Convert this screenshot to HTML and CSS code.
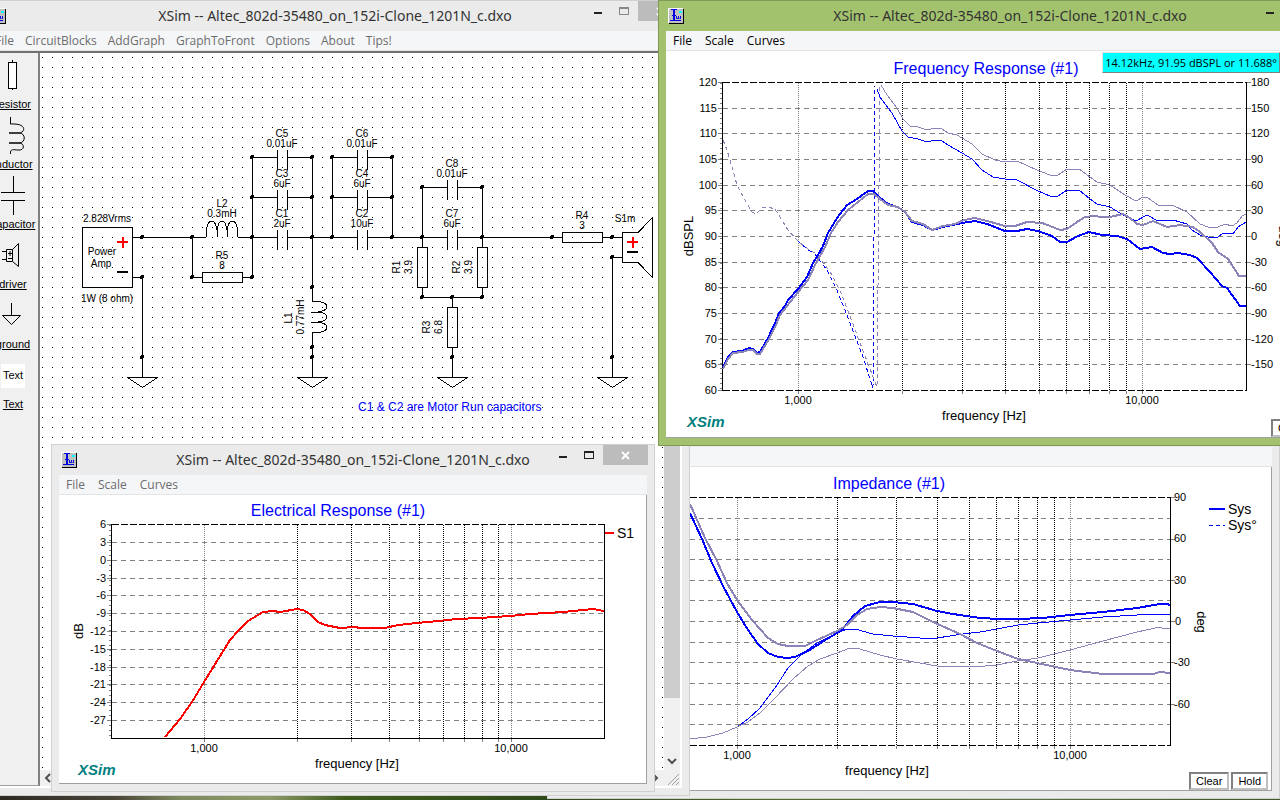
FILE: index.html
```
<!DOCTYPE html>
<html lang="en">
<head>
    <meta charset="UTF-8">
    <meta name="viewport" content="width=device-width, initial-scale=1.0">
    <title>XSim</title>
    <link rel="stylesheet" href="styles.css">
</head>
<body>
    <!-- Shared symbols -->
    <svg class="defs" width="0" height="0" aria-hidden="true">
        <symbol id="app-icon" viewBox="0 0 16 16">
            <rect width="15" height="15" fill="#fff"/>
            <path d="M15 1V15H1V16H16V1Z" fill="#000"/>
            <rect x="1" y="1" width="14" height="14" fill="#c0c0c0"/>
            <path d="M3 1.500H9M2 12.500H13M4 7.500H8M8.500 8V10.500H10.500V8M11.500 10.500H12.500V8" fill="none" stroke="#0000e0"/>
            <path d="M6 2V13" stroke="#0000e0" stroke-width="2"/>
            <rect x="11" y="3" width="3" height="2" fill="#00ffff"/>
        </symbol>
        <symbol id="min-icon" viewBox="0 0 11 11"><path d="M2 7H10" stroke="currentColor" stroke-width="2"/></symbol>
        <symbol id="max-icon" viewBox="0 0 11 11"><path d="M.5 1.500H9.500V8.500H.5ZM0 2H10" fill="none" stroke="currentColor"/></symbol>
        <symbol id="close-icon" viewBox="0 0 11 11"><path d="M2 2L9 9M9 2L2 9" stroke="currentColor" stroke-width="2"/></symbol>
    </svg>

    <main class="desktop">
        <!-- Impedance graph -->
        <section class="window impedance">
            <header class="titlebar">
                <svg class="app-icon"><use href="#app-icon"/></svg>
                <h2></h2>
            </header>
            <nav class="menubar"></nav>
            <div class="graph">
                <svg class="chart" width="716" height="323" viewBox="555 466 716 323">
                    <text class="chart-title" x="889" y="488">Impedance (#1)</text>
                    <path class="grid-h" d="M600 517.500H1170M600 538.500H1170M600 558.500H1170M600 579.500H1170M600 599.500H1170M600 620.500H1170M600 641.500H1170M600 661.500H1170M600 682.500H1170M600 703.500H1170M600 723.500H1170"/>
                    <path class="grid-v" d="M837.500 497V744M896.500 497V744M937.500 497V744M969.500 497V744M996.500 497V744M1018.500 497V744M1037.500 497V744M1054.500 497V744"/>
                    <path class="grid-v decade" d="M737.500 497V744M1070.500 497V744"/>
                    <path class="edge" d="M600 496.500H1170M600 744.500H1170"/>
                    <path class="axis" d="M1170.500 496V745"/>
                    <path class="tick" d="M1171 496.500h4M1171 538.500h4M1171 579.500h4M1171 620.500h4M1171 661.500h4M1171 703.500h4M737.500 745v3M837.500 745v3M896.500 745v3M937.500 745v3M969.500 745v3M996.500 745v3M1018.500 745v3M1037.500 745v3M1054.500 745v3M1070.500 745v3"/>
                    <polyline class="curve blue" points="690,738 707,736 723,732 737,726 748,718 760,707 775,687 788,667 802,653 817,642 837,632 847,628 855,628 873,633 893,635 920,637 937,637 963,633 980,631 997,628 1018,624 1038,622 1070,619 1103,616 1137,614 1158,613 1170,614"/>
                    <polyline class="curve mauve" points="690,738 707,736 723,732 737,726 748,721 760,712 775,697 793,678 808,665 820,658 837,652 850,647 860,648 880,654 897,658 920,662 937,665 985,665 997,664 1017,660 1038,657 1070,649 1103,640 1137,631 1160,626 1164,628 1170,627"/>
                    <polyline class="curve blue thick" points="690,512 702,538 712,562 723,585 730,598 737,611 748,629 758,643 768,652 778,656 787,657 795,656 808,650 827,638 842,629 853,615 865,605 880,601 893,601 913,603 937,610 953,613 980,617 1000,618 1017,618 1043,617 1070,614 1103,611 1137,607 1160,603 1167,603 1170,604"/>
                    <polyline class="curve mauve thick" points="690,503 705,537 717,560 727,582 737,599 752,619 768,637 778,643 788,645 805,645 817,639 837,630 847,624 857,614 867,608 880,606 893,607 913,611 933,621 960,633 977,642 997,650 1018,658 1037,662 1070,669 1103,673 1153,673 1160,671 1170,672"/>
                    <g class="tick-label">
                        <text x="1174" y="500">90</text>
                        <text x="1174" y="541">60</text>
                        <text x="1174" y="583">30</text>
                        <text x="1175" y="624">0</text>
                        <text x="1174" y="665">-30</text>
                        <text x="1174" y="707">-60</text>
                        <text class="middle" x="737" y="758">1,000</text>
                        <text class="middle" x="1070" y="758">10,000</text>
                    </g>
                    <text class="axis-label" x="887" y="774">frequency [Hz]</text>
                    <text class="axis-label" transform="translate(1197 621) rotate(90)">deg</text>
                    <path class="curve blue thick" d="M1209 508H1225"/>
                    <path class="curve blue dashed" d="M1209 524.500H1225"/>
                    <text class="legend" x="1228" y="513">Sys</text>
                    <text class="legend" x="1228" y="529">Sys°</text>
                </svg>
                <div class="graph-buttons">
                    <button type="button">Clear</button>
                    <button type="button">Hold</button>
                </div>
            </div>
        </section>

        <!-- Circuit editor -->
        <section class="window circuit">
            <header class="titlebar">
                <svg class="app-icon"><use href="#app-icon"/></svg>
                <h1>XSim -- Altec_802d-35480_on_152i-Clone_1201N_c.dxo</h1>
                <div class="controls">
                    <button type="button" aria-label="Minimize"><svg><use href="#min-icon"/></svg></button>
                    <button type="button" class="dim" aria-label="Maximize"><svg><use href="#max-icon"/></svg></button>
                    <button type="button" class="close" aria-label="Close"><svg><use href="#close-icon"/></svg></button>
                </div>
            </header>
            <nav class="menubar">
                <button type="button">File</button>
                <button type="button">CircuitBlocks</button>
                <button type="button">AddGraph</button>
                <button type="button">GraphToFront</button>
                <button type="button">Options</button>
                <button type="button">About</button>
                <button type="button">Tips!</button>
            </nav>
            <div class="editor">
                <aside class="palette">
                    <button type="button">
                        <svg width="50" height="44" viewBox="0 0 50 44"><path d="M24.500 7V9M24.500 35V37"/><rect x="20.500" y="9.500" width="8" height="26" fill="#fff"/></svg>
                        <span>resistor</span>
                    </button>
                    <button type="button">
                        <svg width="50" height="44" viewBox="0 0 50 44"><path d="M22.500 4V11C40 10 37 20 31 20H21H31C38 20 38 30 31 30H21H31C37 30 37 38 30 37C26 37 22 35 22.500 41"/></svg>
                        <span>inductor</span>
                    </button>
                    <button type="button">
                        <svg width="50" height="44" viewBox="0 0 50 44"><path d="M25.500 3V19M13 19.500H37M13 27.500H37M25.500 28V42"/></svg>
                        <span>capacitor</span>
                    </button>
                    <button type="button">
                        <svg width="50" height="44" viewBox="0 0 50 44"><path d="M14 18.500H18M14 26.500H18M18.500 16.500H24.500V28.500H18.500ZM24.500 16.500L30.500 10.500V33.500L24.500 28.500M20 20.500H24M22 18V23M20 25.500H24"/></svg>
                        <span>driver</span>
                    </button>
                    <button type="button">
                        <svg width="50" height="44" viewBox="0 0 50 44"><path d="M23.500 10V22M14.500 22.500H32.500L23.500 31.500Z"/></svg>
                        <span>ground</span>
                    </button>
                    <button type="button">
                        <b class="text-sample">Text</b>
                        <span>Text</span>
                    </button>
                </aside>
                <svg class="schematic" width="624" height="717" viewBox="40 53 624 717">
                    <defs>
                        <pattern id="dots" x="42" y="57" width="10" height="10" patternUnits="userSpaceOnUse">
                            <rect width="1" height="1"/>
                        </pattern>
                        <g id="cap"><path d="M-30 .5H-5M-4.500 -7V13M5.500 -7V13M6 .5H30"/></g>
                        <g id="gnd"><path d="M-14.500 .5H15.500L.5 10.500Z"/></g>
                    </defs>
                    <rect x="40" y="53" width="624" height="717" fill="url(#dots)"/>
                    <g class="wire">
                        <path d="M132 237.500H206M238 237.500H252M312 237.500H332M392 237.500H422M482 237.500H562M602 237.500H622"/>
                        <path d="M132 277.500H142.500V377M192.500 237V277.500H202M242 277.500H252.500V157M312.500 157V301M312.500 332V377"/>
                        <path d="M332.500 157V237M392.500 157V237M422.500 187V247M482.500 187V247M422.500 287V297.500H482.500V287M452.500 297V307M452.500 347V377M622 257.500H612.500V377"/>
                        <rect x="82.500" y="227.500" width="50" height="60"/>
                        <rect x="202.500" y="272.500" width="40" height="10"/>
                        <rect x="562.500" y="232.500" width="40" height="10"/>
                        <rect x="417.500" y="247.500" width="10" height="40"/>
                        <rect x="477.500" y="247.500" width="10" height="40"/>
                        <rect x="447.500" y="307.500" width="10" height="40"/>
                        <path d="M206.500 237V230C208 218 215 218 217 230V237V230C219 218 225 218 227 230V237V230C229 218 236 218 237.500 230V237"/>
                        <path d="M312 301.500H318C330 303 330 310 318 312H311H318C330 313 330 321 318 322H311H318C330 324 330 331 318 332.500H312"/>
                        <path d="M638 232.500H622.500V262.500H638L652.500 277.500V217.500Z"/>
                        <use href="#cap" x="282" y="157"/>
                        <use href="#cap" x="282" y="197"/>
                        <use href="#cap" x="282" y="237"/>
                        <use href="#cap" x="362" y="157"/>
                        <use href="#cap" x="362" y="197"/>
                        <use href="#cap" x="362" y="237"/>
                        <use href="#cap" x="452" y="187"/>
                        <use href="#cap" x="452" y="237"/>
                        <use href="#gnd" x="142" y="377"/>
                        <use href="#gnd" x="312" y="377"/>
                        <use href="#gnd" x="452" y="377"/>
                        <use href="#gnd" x="612" y="377"/>
                    </g>
                    <!-- zero-length segments with round caps are the junction dots -->
                    <path class="node" d="M142 237h0M192 237h0M252 237h0M312 237h0M332 237h0M392 237h0M422 237h0M482 237h0M552 237h0M612 237h0M142 277h0M192 277h0M252 277h0M142 357h0M252 157h0M312 157h0M252 197h0M312 197h0M332 157h0M392 157h0M332 197h0M392 197h0M422 187h0M482 187h0M422 297h0M452 297h0M482 297h0M452 357h0M312 287h0M312 347h0M312 357h0M612 257h0M612 357h0"/>
                    <path class="plus" d="M117 242H128M122.500 237V248M627 242H638M632.500 237V248"/>
                    <path class="minus" d="M117 272H128M627 252H638"/>
                    <g class="part-label">
                        <text x="107" y="222">2.828Vrms</text>
                        <text x="102" y="255">Power</text>
                        <text x="101" y="267">Amp</text>
                        <text x="107" y="302">1W (8 ohm)</text>
                        <text x="222" y="207">L2</text>
                        <text x="222" y="217">0.3mH</text>
                        <text x="222" y="259">R5</text>
                        <text x="222" y="269">8</text>
                        <text x="282" y="137">C5</text>
                        <text x="282" y="147">0.01uF</text>
                        <text x="282" y="177">C3</text>
                        <text x="282" y="187">6uF</text>
                        <text x="282" y="217">C1</text>
                        <text x="282" y="227">2uF</text>
                        <text x="362" y="137">C6</text>
                        <text x="362" y="147">0.01uF</text>
                        <text x="362" y="177">C4</text>
                        <text x="362" y="187">6uF</text>
                        <text x="362" y="217">C2</text>
                        <text x="362" y="227">10uF</text>
                        <text x="452" y="167">C8</text>
                        <text x="452" y="177">0.01uF</text>
                        <text x="452" y="217">C7</text>
                        <text x="452" y="227">6uF</text>
                        <text x="582" y="219">R4</text>
                        <text x="582" y="229">3</text>
                        <text x="625" y="222">S1m</text>
                        <text transform="translate(292 318) rotate(-90)">L1</text>
                        <text transform="translate(304 317) rotate(-90)">0.77mH</text>
                        <text transform="translate(400 267) rotate(-90)">R1</text>
                        <text transform="translate(412 267) rotate(-90)">3.9</text>
                        <text transform="translate(460 267) rotate(-90)">R2</text>
                        <text transform="translate(472 267) rotate(-90)">3.9</text>
                        <text transform="translate(430 327) rotate(-90)">R3</text>
                        <text transform="translate(442 327) rotate(-90)">6.8</text>
                    </g>
                    <text class="note" x="358" y="411">C1 &amp; C2 are Motor Run capacitors</text>
                </svg>
                <div class="scroll-v">
                    <div class="thumb"></div>
                    <button type="button" aria-label="Scroll down"><svg width="16" height="16" viewBox="0 0 16 16"><path d="M4 5L8 9L12 5" fill="none" stroke="#505050" stroke-width="2"/></svg></button>
                </div>
                <div class="scroll-h">
                    <button type="button" aria-label="Scroll left"><svg width="16" height="16" viewBox="0 0 16 16"><path d="M10 4L6 8L10 12" fill="none" stroke="#505050" stroke-width="2"/></svg></button>
                    <button type="button" aria-label="Scroll right"><svg width="16" height="16" viewBox="0 0 16 16"><path d="M5 4L9 8L5 12" fill="none" stroke="#505050" stroke-width="2"/></svg></button>
                </div>
                <svg class="grip" width="16" height="16" viewBox="0 0 16 16"><path d="M4 15L15 4M8 15L15 8M12 15L15 12" stroke="#a0a0a0" stroke-width="1"/></svg>
            </div>
        </section>

        <!-- Electrical response graph -->
        <section class="window electrical">
            <header class="titlebar">
                <svg class="app-icon"><use href="#app-icon"/></svg>
                <h2>XSim -- Altec_802d-35480_on_152i-Clone_1201N_c.dxo</h2>
                <div class="controls">
                    <button type="button" aria-label="Minimize"><svg><use href="#min-icon"/></svg></button>
                    <button type="button" aria-label="Maximize"><svg><use href="#max-icon"/></svg></button>
                    <button type="button" class="close" aria-label="Close"><svg><use href="#close-icon"/></svg></button>
                </div>
            </header>
            <nav class="menubar">
                <button type="button">File</button>
                <button type="button">Scale</button>
                <button type="button">Curves</button>
            </nav>
            <div class="graph">
                <svg class="chart" width="587" height="288" viewBox="59 495 587 288">
                    <text class="chart-title" x="338" y="516">Electrical Response (#1)</text>
                    <path class="grid-h" d="M112 542.500H604M112 560.500H604M112 578.500H604M112 595.500H604M112 613.500H604M112 631.500H604M112 649.500H604M112 667.500H604M112 684.500H604M112 702.500H604M112 720.500H604"/>
                    <path class="grid-v" d="M297.500 525V738M351.500 525V738M389.500 525V738M419.500 525V738M443.500 525V738M464.500 525V738M482.500 525V738M498.500 525V738"/>
                    <path class="grid-v decade" d="M204.500 525V738M511.500 525V738"/>
                    <path class="edge" d="M112 524.500H604"/>
                    <path class="axis" d="M111.500 524V738.500H604.500V524"/>
                    <path class="tick" d="M107 524.500h4M107 542.500h4M107 560.500h4M107 578.500h4M107 595.500h4M107 613.500h4M107 631.500h4M107 649.500h4M107 667.500h4M107 684.500h4M107 702.500h4M107 720.500h4M204.500 739v3M297.500 739v3M351.500 739v3M389.500 739v3M419.500 739v3M443.500 739v3M464.500 739v3M482.500 739v3M498.500 739v3M511.500 739v3"/>
                    <path class="tick minor" d="M110 525V738"/>
                    <polyline class="curve red thick" points="165,737 180,719 192,702 204,682 217,661 230,640 238,631 248,621 263,612 273,611 280,612 297,609 303,610 310,614 318,622 325,625 340,628 355,627 360,628 385,628 398,625 417,623 438,621 457,619 480,618 510,616 530,614 563,612 593,609 604,611"/>
                    <g class="tick-label">
                        <g class="end">
                            <text x="106" y="528">6</text>
                            <text x="106" y="546">3</text>
                            <text x="106" y="564">0</text>
                            <text x="106" y="582">-3</text>
                            <text x="106" y="599">-6</text>
                            <text x="106" y="617">-9</text>
                            <text x="106" y="635">-12</text>
                            <text x="106" y="653">-15</text>
                            <text x="106" y="671">-18</text>
                            <text x="106" y="688">-21</text>
                            <text x="106" y="706">-24</text>
                            <text x="106" y="724">-27</text>
                        </g>
                        <text class="middle" x="204" y="752">1,000</text>
                        <text class="middle" x="511" y="752">10,000</text>
                    </g>
                    <text class="axis-label" x="357" y="768">frequency [Hz]</text>
                    <text class="axis-label" transform="translate(83 631) rotate(-90)">dB</text>
                    <path class="curve red thick" d="M605 533H614"/>
                    <text class="legend" x="617" y="538">S1</text>
                    <text class="brand" x="78" y="775">XSim</text>
                </svg>
            </div>
        </section>

        <!-- Frequency response graph -->
        <section class="window frequency active">
            <header class="titlebar">
                <svg class="app-icon"><use href="#app-icon"/></svg>
                <h2>XSim -- Altec_802d-35480_on_152i-Clone_1201N_c.dxo</h2>
                <div class="controls">
                    <button type="button" aria-label="Minimize"><svg><use href="#min-icon"/></svg></button>
                    <button type="button" aria-label="Maximize"><svg><use href="#max-icon"/></svg></button>
                    <button type="button" class="close" aria-label="Close"><svg><use href="#close-icon"/></svg></button>
                </div>
            </header>
            <nav class="menubar">
                <button type="button">File</button>
                <button type="button">Scale</button>
                <button type="button">Curves</button>
            </nav>
            <div class="graph">
                <svg class="chart" width="687" height="386" viewBox="666 51 687 386">
                    <text class="chart-title" x="986" y="74">Frequency Response (#1)</text>
                    <path class="grid-h" d="M723 108.500H1246M723 133.500H1246M723 159.500H1246M723 185.500H1246M723 210.500H1246M723 236.500H1246M723 262.500H1246M723 287.500H1246M723 313.500H1246M723 339.500H1246M723 364.500H1246"/>
                    <path class="grid-v" d="M902.500 83V390M962.500 83V390M1005.500 83V390M1039.500 83V390M1066.500 83V390M1089.500 83V390M1109.500 83V390M1126.500 83V390"/>
                    <path class="grid-v decade" d="M798.500 83V390M1142.500 83V390"/>
                    <path class="edge" d="M723 82.500H1246M723 390.500H1246"/>
                    <path class="axis" d="M722.500 82V391M1246.500 82V391"/>
                    <path class="tick" d="M718 82.500h4M718 108.500h4M718 133.500h4M718 159.500h4M718 185.500h4M718 210.500h4M718 236.500h4M718 262.500h4M718 287.500h4M718 313.500h4M718 339.500h4M718 364.500h4M718 390.500h4M1247 82.500h4M1247 108.500h4M1247 133.500h4M1247 159.500h4M1247 185.500h4M1247 210.500h4M1247 236.500h4M1247 262.500h4M1247 287.500h4M1247 313.500h4M1247 339.500h4M1247 364.500h4M798.500 391v3M902.500 391v3M962.500 391v3M1005.500 391v3M1039.500 391v3M1066.500 391v3M1089.500 391v3M1109.500 391v3M1126.500 391v3M1142.500 391v3"/>
                    <path class="tick minor" d="M721 83V390"/>
                    <polyline class="curve blue dashed" points="798,241 807,249 815,254 827,270 837,290 850,323 863,357 873,388 875,86"/>
                    <polyline class="curve mauve dashed" points="723,140 727,150 732,167 737,185 745,200 752,212 756,214 762,208 768,207 775,209 788,230 798,241 805,247 815,253 823,262 832,275 842,295 860,343 877,387 880,86"/>
                    <polyline class="curve blue" points="877,89 880,97 892,113 902,131 908,137 918,139 927,142 935,140 942,141 948,145 962,153 972,159 982,170 993,177 1005,179 1017,180 1038,191 1050,196 1058,196 1067,190 1079,190 1090,199 1097,204 1110,207 1125,216 1136,221 1147,215 1158,221 1173,220 1187,224 1192,230 1200,235 1212,238 1218,237 1223,233 1233,234 1238,227 1246,222"/>
                    <polyline class="curve mauve" points="881,85 887,95 897,108 903,119 910,126 918,127 927,130 935,128 942,129 948,133 957,135 972,144 982,154 995,160 1005,162 1017,161 1037,170 1050,175 1058,175 1067,169 1079,169 1090,177 1097,182 1110,185 1125,195 1136,201 1143,197 1148,198 1158,205 1172,205 1187,212 1200,224 1208,227 1218,227 1225,224 1232,226 1237,223 1242,216 1246,214"/>
                    <polyline class="curve blue thick" points="723,367 728,357 733,352 742,351 749,348 753,349 757,353 760,352 768,338 775,323 779,313 785,306 788,300 798,289 807,277 813,263 818,255 823,246 828,233 837,218 847,205 857,199 868,191 873,191 878,196 888,204 898,207 905,212 912,222 923,225 932,230 943,227 962,223 975,221 987,224 1005,231 1017,231 1027,229 1038,231 1052,236 1060,242 1067,242 1078,236 1089,232 1102,235 1117,236 1127,239 1140,249 1152,247 1163,253 1170,254 1178,253 1190,255 1197,258 1210,272 1222,286 1227,288 1240,306 1246,306"/>
                    <polyline class="curve mauve thick" points="723,369 728,359 733,353 742,352 749,350 753,350 757,354 760,354 769,339 776,325 780,315 787,306 798,292 808,280 815,265 820,256 825,247 831,233 838,222 848,210 858,202 868,194 874,194 880,199 888,205 898,207 905,212 912,221 923,224 932,230 943,226 955,224 964,220 975,218 987,221 1005,226 1015,226 1027,222 1042,223 1050,226 1060,230 1067,229 1077,222 1085,217 1093,216 1103,217 1110,217 1123,214 1130,218 1137,224 1143,225 1153,221 1167,227 1180,225 1193,227 1200,232 1212,243 1218,252 1228,259 1239,276 1246,276"/>
                    <g class="tick-label">
                        <g class="end">
                            <text x="717" y="86">120</text>
                            <text x="717" y="112">115</text>
                            <text x="717" y="137">110</text>
                            <text x="717" y="163">105</text>
                            <text x="717" y="189">100</text>
                            <text x="717" y="214">95</text>
                            <text x="717" y="240">90</text>
                            <text x="717" y="266">85</text>
                            <text x="717" y="291">80</text>
                            <text x="717" y="317">75</text>
                            <text x="717" y="343">70</text>
                            <text x="717" y="368">65</text>
                            <text x="717" y="394">60</text>
                        </g>
                        <text x="1251" y="86">180</text>
                        <text x="1251" y="112">150</text>
                        <text x="1251" y="137">120</text>
                        <text x="1251" y="163">90</text>
                        <text x="1251" y="189">60</text>
                        <text x="1251" y="214">30</text>
                        <text x="1251" y="240">0</text>
                        <text x="1251" y="266">-30</text>
                        <text x="1251" y="291">-60</text>
                        <text x="1251" y="317">-90</text>
                        <text x="1251" y="343">-120</text>
                        <text x="1251" y="368">-150</text>
                        <text class="middle" x="798" y="404">1,000</text>
                        <text class="middle" x="1142" y="404">10,000</text>
                    </g>
                    <text class="axis-label" x="984" y="420">frequency [Hz]</text>
                    <text class="axis-label" transform="translate(693 236) rotate(-90)">dBSPL</text>
                    <text class="axis-label" transform="translate(1279 236) rotate(90)">deg</text>
                    <text class="brand" x="687" y="427">XSim</text>
                </svg>
                <output class="readout">14.12kHz, 91.95 dBSPL or 11.688°</output>
                <div class="graph-buttons">
                    <button type="button">Clear</button>
                    <button type="button">Hold</button>
                </div>
            </div>
        </section>
    </main>
</body>
</html>
```

FILE: styles.css
```
* {
    box-sizing: border-box;
}
body {
    font-family: "Open Sans", "Noto Sans", sans-serif;
    margin: 0;
}
button {
    font: inherit;
    color: inherit;
    padding: 0;
    border: none;
    background: none;
}
svg {
    display: block;
}
.defs {
    position: absolute;
}
.desktop {
    position: relative;
    height: 100vh;
    overflow: hidden;
    background: linear-gradient(90deg, #2c2a20, #4a4438 9%, #7d8a5e 14%, #8d9a68 21%, #3d5c1c 27%, #2f4a1a 42%, #4c6a28 60%, #5d7038 78%, #3f5a26);
}

/* Windows */
.window {
    position: absolute;
    display: flex;
    flex-direction: column;
    padding: 0 7px 7px;
    border: 1px solid #d0d0d0;
    background-color: #ebebeb;
    color: #6d6d6d;
}
.window.active {
    background-color: #a3c26e;
    border-color: #80985a;
    color: #000;
}
.impedance {
    left: 547px;
    top: 416px;
    width: 733px;
}
.circuit {
    left: -20px;
    top: 0;
    width: 710px;
}
.electrical {
    left: 51px;
    top: 444px;
    width: 604px;
}
.frequency {
    left: 658px;
    top: 0;
    width: 704px;
}
.titlebar {
    display: grid;
    grid-template-columns: 1fr auto 1fr;
    height: 30px;
    align-items: center;
}
.titlebar h1,
.titlebar h2 {
    margin: 0;
    font-family: "Noto Sans", "Open Sans", sans-serif;
    font-size: 14px;
    line-height: 28px;
    font-weight: normal;
    color: #333;
    white-space: nowrap;
}
.app-icon {
    width: 16px;
    height: 16px;
    margin-left: 2px;
}
.controls {
    display: flex;
    align-self: start;
    justify-self: end;
    margin-right: -1px;
}
.controls button {
    display: flex;
    justify-content: center;
    align-items: center;
    width: 27px;
    height: 20px;
    color: #222;
}
.controls svg {
    width: 11px;
    height: 11px;
    shape-rendering: crispEdges;
}
.controls .dim {
    color: #888;
}
.controls .close {
    width: 45px;
    background-color: #bcbcbc;
    color: #fff;
}
.controls .close svg {
    shape-rendering: auto;
}
.menubar {
    display: flex;
    gap: 13px;
    height: 20px;
    padding: 0 7px;
    border-bottom: 1px solid #e4e4e4;
    background-color: #f5f6f8;
    font-size: 12px;
}
.circuit .menubar {
    gap: 11px;
}

/* Graphs */
.graph {
    display: grid;
    border-right: 1px solid #a0a0a0;
    border-bottom: 1px solid #a0a0a0;
    background-color: #fff;
}
.graph > * {
    grid-area: 1 / 1;
}
.chart,
.schematic {
    font-family: "Liberation Sans", Arial, sans-serif;
}
.chart path,
.chart polyline {
    fill: none;
    shape-rendering: crispEdges;
}
.chart-title {
    font-size: 16px;
    fill: #0000ff;
    text-anchor: middle;
}
.grid-h {
    stroke: #808080;
    stroke-dasharray: 5 4;
}
.grid-v {
    stroke: #000;
    stroke-dasharray: 1 1;
}
.grid-v.decade {
    stroke: #808080;
}
.edge {
    stroke: #000;
    stroke-dasharray: 7 2;
}
.axis {
    stroke: #000;
}
.tick {
    stroke: #808080;
}
.tick.minor {
    stroke-width: 2;
    stroke-dasharray: 1 4;
}
.curve {
    stroke-width: 1;
}
.curve.thick {
    stroke-width: 2;
}
.curve.dashed {
    stroke-dasharray: 4 3;
}
.blue {
    stroke: #0000ff;
}
.mauve {
    stroke: #8a84b8;
}
.red {
    stroke: #ff0000;
}
.tick-label {
    font-size: 11px;
}
.middle {
    text-anchor: middle;
}
.end {
    text-anchor: end;
}
.axis-label {
    font-size: 13px;
    text-anchor: middle;
}
.legend {
    font-size: 14px;
}
.brand {
    font-size: 15px;
    font-weight: bold;
    font-style: italic;
    fill: #008080;
}
.readout {
    align-self: start;
    justify-self: end;
    margin: 1px 73px 0 0;
    padding: 0 2px;
    border: 1px solid #808080;
    border-top-color: #e0e0e0;
    border-left-color: #e0e0e0;
    background-color: #00ffff;
    font-size: 11px;
    line-height: 19px;
}
.graph-buttons {
    display: flex;
    gap: 2px;
    align-self: end;
    justify-self: end;
    padding-right: 3px;
}
.graph-buttons button {
    height: 18px;
    padding: 0 5px;
    border: 2px solid #c0c0c0;
    border-top-color: #808080;
    border-left-color: #808080;
    background-color: #fff;
    color: #000;
    font-family: "Liberation Sans", Arial, sans-serif;
    font-size: 11px;
}

/* Circuit editor */
.editor {
    display: grid;
    grid-template-columns: 52px 624px 16px;
    border-top: 2px solid #707070;
    border-right: 2px solid #fff;
    border-bottom: 2px solid #fff;
    background-color: #f0f0f0;
}
.palette {
    grid-row: 1 / 3;
    display: flex;
    flex-direction: column;
    border-right: 2px solid #808080;
    border-bottom: 1px solid #a0a0a0;
    color: #000;
    font-family: "Liberation Sans", Arial, sans-serif;
    font-size: 11px;
}
.palette button {
    display: flex;
    flex-direction: column;
    align-items: center;
    height: 60px;
}
.palette svg {
    fill: none;
    stroke: #000;
}
.palette span {
    line-height: 14px;
    text-decoration: underline;
}
.text-sample {
    width: 24px;
    height: 24px;
    margin: 11px 0 9px;
    background-color: #fff;
    font-weight: normal;
    line-height: 22px;
}
.schematic {
    background-color: #fff;
    shape-rendering: crispEdges;
}
.wire {
    fill: none;
    stroke: #000;
}
.node {
    stroke: #000;
    stroke-width: 4;
    stroke-linecap: round;
}
.plus {
    stroke: #ff0000;
    stroke-width: 2;
}
.minus {
    stroke: #000;
    stroke-width: 2;
}
.part-label {
    font-size: 10px;
    text-anchor: middle;
}
.note {
    font-size: 12px;
    fill: #0000ff;
}
.scroll-v {
    display: flex;
    flex-direction: column;
    justify-content: space-between;
}
.scroll-v .thumb {
    height: 90%;
    background-color: #cdcdcd;
}
.scroll-h {
    display: flex;
    justify-content: space-between;
}
```
